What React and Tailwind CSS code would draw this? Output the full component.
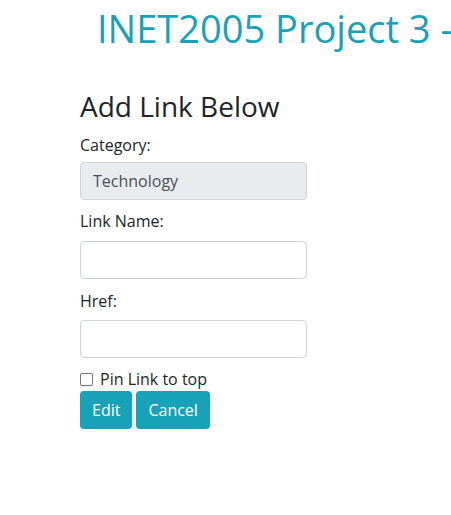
export default function App() {
  return (
    <div className="w-[451px] h-[515px] overflow-hidden bg-white text-[#212529] font-['Open_Sans',sans-serif]">
      <h1 className="pl-[97px] pt-[5px] text-[38px] leading-[46px] text-[#17a2b8] whitespace-nowrap">
        INET2005 Project 3 - Links
      </h1>
      <div className="pl-[80px] w-[307px] box-content">
        <h3 className="mt-[38px] text-[28px] leading-[34px] mb-[10px]">Add Link Below</h3>
        <form>
          <label className="block text-[16px] leading-6 mb-[5px]">Category:</label>
          <input
            disabled
            value="Technology"
            readOnly
            className="block w-[227px] h-[38px] px-3 text-[16px] rounded border border-[#ced4da] bg-[#e9ecef] text-[#495057]"
          />
          <label className="block text-[16px] leading-6 mt-[9px] mb-[8px]">Link Name:</label>
          <input className="block w-[227px] h-[38px] px-3 text-[16px] rounded border border-[#ced4da] bg-white" />
          <label className="block text-[16px] leading-6 mt-[10px] mb-[7px]">Href:</label>
          <input className="block w-[227px] h-[38px] px-3 text-[16px] rounded border border-[#ced4da] bg-white" />
          <label className="flex items-center gap-[7px] mt-[9px] h-6 text-[16px]">
            <input
              type="checkbox"
              className="appearance-none w-[13px] h-[13px] m-0 border border-[#767676] rounded-[2px] bg-white"
            />
            Pin Link to top
          </label>
          <div className="flex gap-1">
            <button type="button" className="h-[38px] px-3 rounded bg-[#17a2b8] text-white text-[16px]">
              Edit
            </button>
            <button type="button" className="h-[38px] px-3 rounded bg-[#17a2b8] text-white text-[16px]">
              Cancel
            </button>
          </div>
        </form>
      </div>
    </div>
  )
}
